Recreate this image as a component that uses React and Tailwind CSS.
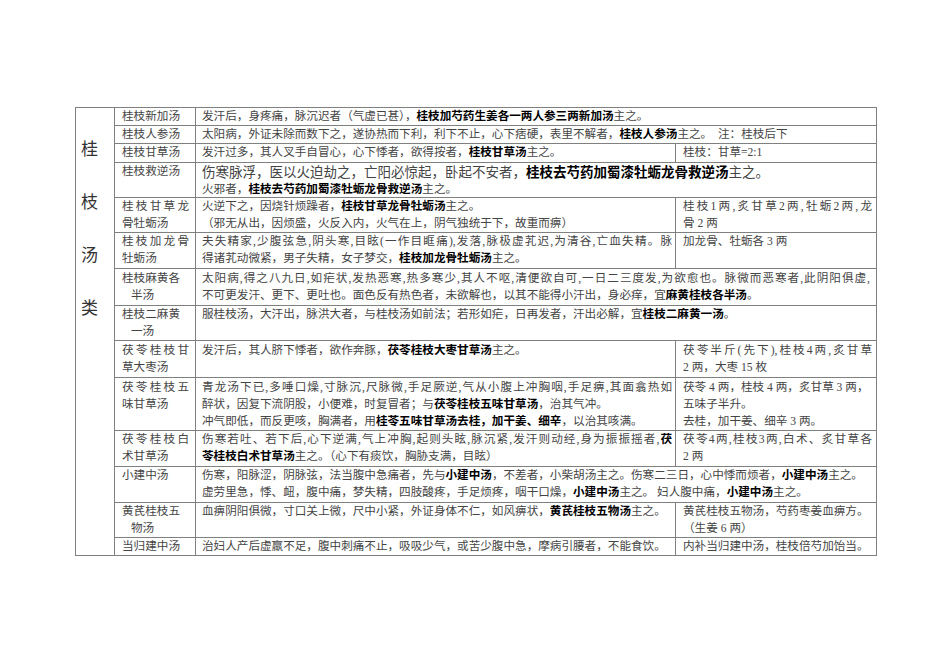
import React from "react";

const B = ({ children }) => <span className="font-bold text-black">{children}</span>;

const L = ({ j, children, className = "" }) => (
  <div className={(j ? "[text-align-last:justify] text-justify " : "whitespace-nowrap ") + className}>{children}</div>
);

const td = "border border-[#808080] align-top p-0";
const c2 = td + " pl-[7px] pr-[6px]";
const c3 = td + " pl-[6px] pr-[3px]";
const c4 = td + " pl-[7px] pr-[4px]";

export default function App() {
  return (
    <div className="w-[950px] h-[672px] bg-white pt-[107px] pl-[75px] font-['Liberation_Serif','Noto_Sans_CJK_SC',serif] text-[11.6px] leading-[17px] text-[#444]">
      <table className="border-collapse table-fixed w-[801px]">
        <colgroup>
          <col className="w-[39px]" />
          <col className="w-[81px]" />
          <col className="w-[480px]" />
          <col className="w-[201px]" />
        </colgroup>
        <tbody>
          <tr className="h-[18px]">
            <td rowSpan={14} className={td + " pl-[5px]"}>
              <div className="flex flex-col pt-[15px] text-[17px] leading-[53px] text-[#333]">
                <span>桂</span>
                <span>枝</span>
                <span>汤</span>
                <span>类</span>
              </div>
            </td>
            <td className={c2}><L>桂枝新加汤</L></td>
            <td colSpan={2} className={c3}>
              <L>发汗后，身疼痛，脉沉迟者（气虚已甚），<B>桂枝加芍药生姜各一两人参三两新加汤</B>主之。</L>
            </td>
          </tr>
          <tr className="h-[18px]">
            <td className={c2}><L>桂枝人参汤</L></td>
            <td colSpan={2} className={c3}>
              <L>太阳病，外证未除而数下之，遂协热而下利，利下不止，心下痞硬，表里不解者，<B>桂枝人参汤</B>主之。　注：桂枝后下</L>
            </td>
          </tr>
          <tr className="h-[19px]">
            <td className={c2}><L>桂枝甘草汤</L></td>
            <td className={c3}>
              <L>发汗过多，其人叉手自冒心，心下悸者，欲得按者，<B>桂枝甘草汤</B>主之。</L>
            </td>
            <td className={c4}><L>桂枝：甘草=2:1</L></td>
          </tr>
          <tr className="h-[35px]">
            <td className={c2}><L>桂枝救逆汤</L></td>
            <td colSpan={2} className={c3}>
              <L className="text-[13.5px] leading-[19px]">伤寒脉浮，医以火迫劫之，亡阳必惊起，卧起不安者，<B>桂枝去芍药加蜀漆牡蛎龙骨救逆汤</B>主之。</L>
              <L className="leading-[15px]">火邪者，<B>桂枝去芍药加蜀漆牡蛎龙骨救逆汤</B>主之。</L>
            </td>
          </tr>
          <tr className="h-[35px]">
            <td className={c2}>
              <L j>桂枝甘草龙</L>
              <L>骨牡蛎汤</L>
            </td>
            <td className={c3}>
              <L>火逆下之，因烧针烦躁者，<B>桂枝甘草龙骨牡蛎汤</B>主之。</L>
              <L>（邪无从出，因烦盛，火反入内，火气在上，阴气独统于下，故重而痹）</L>
            </td>
            <td className={c4}>
              <L j>桂枝1两,炙甘草2两,牡蛎2两,龙</L>
              <L>骨 2 两</L>
            </td>
          </tr>
          <tr className="h-[36px]">
            <td className={c2}>
              <L j>桂枝加龙骨</L>
              <L>牡蛎汤</L>
            </td>
            <td className={c3}>
              <L j>夫失精家,少腹弦急,阴头寒,目眩(一作目眶痛),发落,脉极虚芤迟,为清谷,亡血失精。脉</L>
              <L>得诸芤动微紧，男子失精，女子梦交，<B>桂枝加龙骨牡蛎汤</B>主之。</L>
            </td>
            <td className={c4}><L>加龙骨、牡蛎各 3 两</L></td>
          </tr>
          <tr className="h-[37px]">
            <td className={c2 + " pt-[1px]"}>
              <L>桂枝麻黄各</L>
              <L className="pl-[9px]">半汤</L>
            </td>
            <td colSpan={2} className={c3 + " pt-[1px] pr-[6px]"}>
              <L j>太阳病,得之八九日,如疟状,发热恶寒,热多寒少,其人不呕,清便欲自可,一日二三度发,为欲愈也。脉微而恶寒者,此阴阳俱虚,</L>
              <L>不可更发汗、更下、更吐也。面色反有热色者，未欲解也，以其不能得小汗出，身必痒，宜<B>麻黄桂枝各半汤</B>。</L>
            </td>
          </tr>
          <tr className="h-[35px]">
            <td className={c2}>
              <L>桂枝二麻黄</L>
              <L className="pl-[9px]">一汤</L>
            </td>
            <td colSpan={2} className={c3}>
              <L>服桂枝汤，大汗出，脉洪大者，与桂枝汤如前法；若形如疟，日再发者，汗出必解，宜<B>桂枝二麻黄一汤</B>。</L>
            </td>
          </tr>
          <tr className="h-[37px]">
            <td className={c2 + " pt-[1px]"}>
              <L j>茯苓桂枝甘</L>
              <L>草大枣汤</L>
            </td>
            <td className={c3 + " pt-[1px]"}>
              <L>发汗后，其人脐下悸者，欲作奔豚，<B>茯苓桂枝大枣甘草汤</B>主之。</L>
            </td>
            <td className={c4 + " pt-[1px]"}>
              <L j>茯苓半斤(先下),桂枝4两,炙甘草</L>
              <L>2 两，大枣 15 枚</L>
            </td>
          </tr>
          <tr className="h-[53px]">
            <td className={c2 + " pt-[1px]"}>
              <L j>茯苓桂枝五</L>
              <L>味甘草汤</L>
            </td>
            <td className={c3 + " pt-[1px]"}>
              <L j>青龙汤下已,多唾口燥,寸脉沉,尺脉微,手足厥逆,气从小腹上冲胸咽,手足痹,其面翕热如</L>
              <L>醉状，因复下流阴股，小便难，时复冒者；与<B>茯苓桂枝五味甘草汤</B>，治其气冲。</L>
              <L>冲气即低，而反更咳，胸满者，用<B>桂苓五味甘草汤去桂，加干姜、细辛</B>，以治其咳满。</L>
            </td>
            <td className={c4 + " pt-[1px]"}>
              <L>茯苓 4 两，桂枝 4 两，炙甘草 3 两，</L>
              <L>五味子半升。</L>
              <L>去桂，加干姜、细辛 3 两。</L>
            </td>
          </tr>
          <tr className="h-[36px]">
            <td className={c2}>
              <L j>茯苓桂枝白</L>
              <L>术甘草汤</L>
            </td>
            <td className={c3}>
              <L j>伤寒若吐、若下后,心下逆满,气上冲胸,起则头眩,脉沉紧,发汗则动经,身为振振摇者,<B>茯</B></L>
              <L><B>苓桂枝白术甘草汤</B>主之。（心下有痰饮，胸胁支满，目眩）</L>
            </td>
            <td className={c4}>
              <L j>茯苓4两,桂枝3两,白术、炙甘草各</L>
              <L>2 两</L>
            </td>
          </tr>
          <tr className="h-[36px]">
            <td className={c2}><L>小建中汤</L></td>
            <td colSpan={2} className={c3}>
              <L>伤寒，阳脉涩，阴脉弦，法当腹中急痛者，先与<B>小建中汤</B>，不差者，小柴胡汤主之。伤寒二三日，心中悸而烦者，<B>小建中汤</B>主之。</L>
              <L>虚劳里急，悸、衄，腹中痛，梦失精，四肢酸疼，手足烦疼，咽干口燥，<B>小建中汤</B>主之。 妇人腹中痛，<B>小建中汤</B>主之。</L>
            </td>
          </tr>
          <tr className="h-[35px]">
            <td className={c2}>
              <L>黄芪桂枝五</L>
              <L className="pl-[9px]">物汤</L>
            </td>
            <td className={c3}>
              <L>血痹阴阳俱微，寸口关上微，尺中小紧，外证身体不仁，如风痹状，<B>黄芪桂枝五物汤</B>主之。</L>
            </td>
            <td className={c4}>
              <L>黄芪桂枝五物汤，芍药枣姜血痹方。</L>
              <L>（生姜 6 两）</L>
            </td>
          </tr>
          <tr className="h-[18px]">
            <td className={c2}><L>当归建中汤</L></td>
            <td className={c3}>
              <L>治妇人产后虚羸不足，腹中刺痛不止，吸吸少气，或苦少腹中急，摩病引腰者，不能食饮。</L>
            </td>
            <td className={c4}>
              <L>内补当归建中汤，桂枝倍芍加饴当。</L>
            </td>
          </tr>
        </tbody>
      </table>
    </div>
  );
}
